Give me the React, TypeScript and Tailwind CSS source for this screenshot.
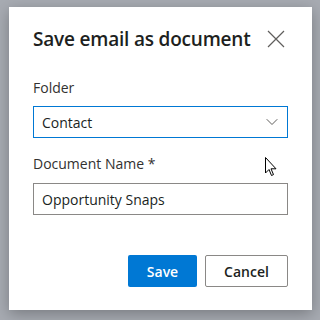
import { ChevronDown } from 'lucide-react';

const FONT = { fontFamily: '"Open Sans", "Noto Sans", Arial, sans-serif' };

export default function App() {
  return (
    <div className="relative w-[320px] h-[320px] bg-[#a7abb2] pt-[7px] pl-[9px]" style={FONT}>
      <div className="w-[303px] h-[303px] bg-white shadow-[0_4px_14px_rgba(0,0,0,0.28)] flex flex-col px-6 pt-[18px]">
        {/* header */}
        <div className="flex items-center justify-between">
          <h1 className="text-[19px] leading-7 font-semibold text-[#201f1e] tracking-[-0.2px]">
            Save email as document
          </h1>
          <button className="w-[18px] h-[18px] mr-[3px] text-[#605e5c]">
            <svg width="18" height="18" viewBox="0 0 18 18" fill="none" stroke="currentColor" strokeWidth="1.2">
              <path d="M1 1 L17 17 M17 1 L1 17" />
            </svg>
          </button>
        </div>

        <label className="mt-[25px] text-[14px] leading-5 text-[#323130]">Folder</label>
        <div className="mt-2 h-8 border border-[#0078d4] flex items-center justify-between pl-[8px] pr-[5px]">
          <span className="text-[14px] text-[#201f1e]">Contact</span>
          <ChevronDown className="w-5 h-5 text-[#605e5c]" strokeWidth={1.2} />
        </div>

        <label className="mt-4 text-[14px] leading-5 text-[#323130]">Document Name *</label>
        <div className="mt-[9px] h-8 border border-[#8a8886] flex items-center pl-[8px]">
          <span className="text-[14px] text-[#201f1e]">Opportunity Snaps</span>
        </div>

        <div className="mt-10 flex justify-end gap-2">
          <button className="w-[69px] h-8 rounded-[2px] bg-[#0078d4] text-white text-[14px] font-semibold">
            Save
          </button>
          <button className="w-[83px] h-8 rounded-[2px] border border-[#8a8886] bg-white text-[#201f1e] text-[14px] font-semibold">
            Cancel
          </button>
        </div>
      </div>

      {/* mouse pointer */}
      <svg className="absolute left-[265px] top-[157px]" width="13" height="20" viewBox="0 0 13 20">
        <path d="M0.5 0.5 L0.5 16 L4 12.5 L6.5 18.5 L8.5 17.6 L6 11.8 L11 11.8 Z" fill="white" stroke="black" strokeWidth="1" strokeLinejoin="round" />
      </svg>
    </div>
  );
}
